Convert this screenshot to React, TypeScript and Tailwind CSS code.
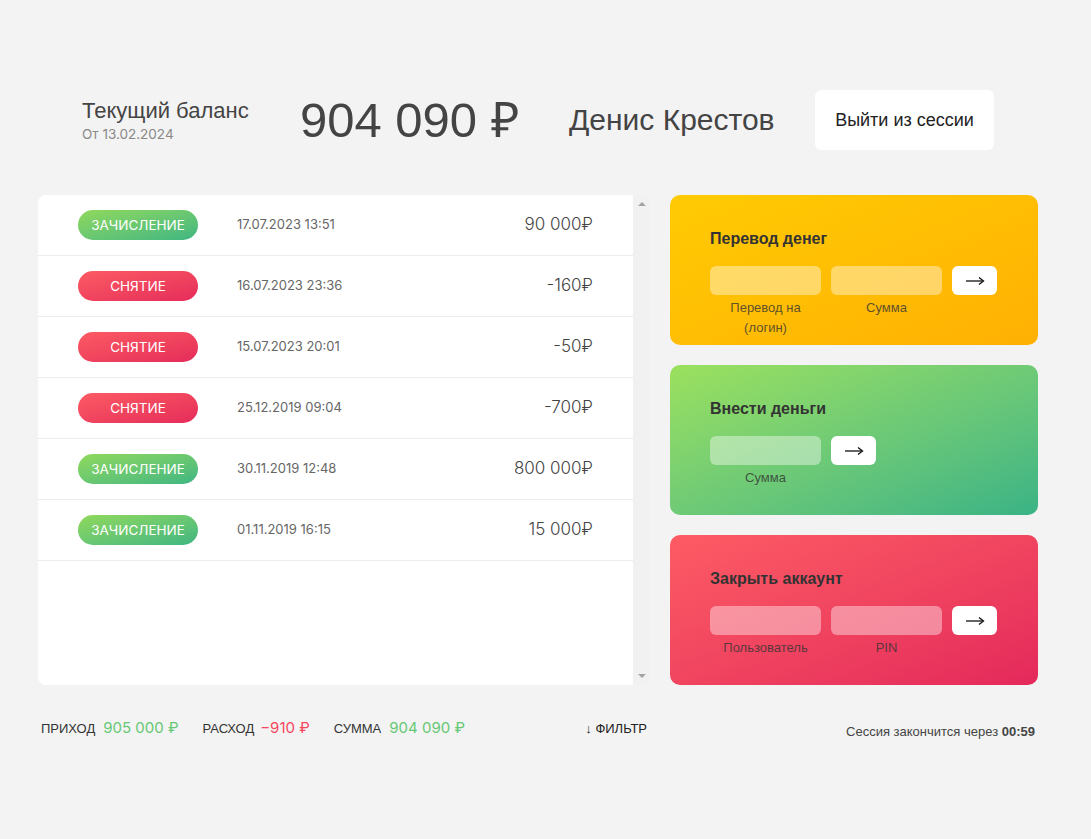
import React from 'react';

type Movement = {
  type: 'deposit' | 'withdrawal';
  date: string;
  amount: string;
};

const movements: Movement[] = [
  { type: 'deposit', date: '17.07.2023 13:51', amount: '90 000₽' },
  { type: 'withdrawal', date: '16.07.2023 23:36', amount: '-160₽' },
  { type: 'withdrawal', date: '15.07.2023 20:01', amount: '-50₽' },
  { type: 'withdrawal', date: '25.12.2019 09:04', amount: '-700₽' },
  { type: 'deposit', date: '30.11.2019 12:48', amount: '800 000₽' },
  { type: 'deposit', date: '01.11.2019 16:15', amount: '15 000₽' },
];

const sans = "font-['Liberation_Sans','Helvetica',sans-serif]";
const geo = "font-['Inter','Lato',sans-serif]";

const Arrow = () => (
  <svg width="20" height="10" viewBox="0 0 20 10" fill="none" stroke="#111" strokeWidth="1.3">
    <path d="M1 5h17" />
    <path d="M14 1.5L18.5 5L14 8.5" />
  </svg>
);

const GoButton = () => (
  <button className="flex h-[29px] w-[45px] items-center justify-center rounded-[6px] bg-white">
    <Arrow />
  </button>
);

const OpCard: React.FC<{
  title: string;
  bg: string;
  labels: string[];
}> = ({ title, bg, labels }) => (
  <div className={`h-[150px] rounded-[10px] px-10 pt-[32px] ${bg}`}>
    <h2 className={`text-[16px] font-bold text-[#333] ${sans}`}>{title}</h2>
    <div className="mt-[15px] flex gap-[10px]">
      {labels.map((label) => (
        <div key={label} className="flex w-[111px] flex-col items-center">
          <div className="h-[29px] w-full rounded-[6px] bg-white/40" />
          <span className={`mt-[3px] px-3 text-center text-[13px] leading-[20px] text-[#333]/80 ${sans}`}>{label}</span>
        </div>
      ))}
      <GoButton />
    </div>
  </div>
);

export default function App() {
  return (
    <div className={`min-h-[839px] bg-[#f3f3f3] text-[#444] ${sans}`}>
      <div className="ml-[38px] w-[1000px] pt-[90px]">
        {/* Header */}
        <header className="flex items-center pl-[44px]">
          <div className="w-[218px] pt-[2px]">
            <p className="text-[22px] leading-[26px] text-[#444]">Текущий баланс</p>
            <p className={`text-[13.5px] text-[#888] ${geo}`}>От 13.02.2024</p>
          </div>
          <p className="w-[269px] text-[49px] leading-none text-[#444]">904 090 ₽</p>
          <p className="w-[246px] text-[30px] leading-none text-[#444]">Денис Крестов</p>
          <button className="h-[60px] w-[179px] rounded-[6px] bg-white text-[18px] text-[#222]">
            Выйти из сессии
          </button>
        </header>

        {/* Main */}
        <main className="mt-[45px] flex gap-5">
          <div className="flex h-[490px] w-[612px] overflow-hidden rounded-[8px] bg-white">
            <div className="flex-1">
              {movements.map((m, i) => (
                <div key={i} className="flex h-[61px] items-center border-b border-[#ececec] pl-10 pr-10">
                  <span
                    className={`flex h-[30px] w-[120px] items-center justify-center rounded-full text-[13.5px] text-white ${geo} ${
                      m.type === 'deposit'
                        ? 'bg-gradient-to-br from-[#8fd95a] to-[#3db681]'
                        : 'bg-gradient-to-br from-[#fc5a63] to-[#e52a5a]'
                    }`}
                  >
                    {m.type === 'deposit' ? 'ЗАЧИСЛЕНИЕ' : 'СНЯТИЕ'}
                  </span>
                  <span className={`ml-[39px] text-[13px] text-[#666] ${geo}`}>{m.date}</span>
                  <span className={`ml-auto text-[17px] font-light text-[#444] ${geo}`}>{m.amount}</span>
                </div>
              ))}
            </div>
            {/* scrollbar */}
            <div className="flex w-[17px] flex-col items-center justify-between bg-[#f1f1f1] py-[7px]">
              <span className="h-0 w-0 border-x-[4px] border-b-[4px] border-x-transparent border-b-[#a3a3a3]" />
              <span className="h-0 w-0 border-x-[4px] border-t-[4px] border-x-transparent border-t-[#a3a3a3]" />
            </div>
          </div>

          <div className="flex w-[368px] flex-col gap-5">
            <OpCard
              title="Перевод денег"
              bg="bg-gradient-to-br from-[#ffcb03] to-[#ffb003]"
              labels={['Перевод на (логин)', 'Сумма']}
            />
            <div className="h-[150px] rounded-[10px] bg-gradient-to-br from-[#9be15d] to-[#39b385] px-10 pt-[32px]">
              <h2 className="text-[16px] font-bold text-[#333]">Внести деньги</h2>
              <div className="mt-[15px] flex gap-[10px]">
                <div className="flex w-[111px] flex-col items-center">
                  <div className="h-[29px] w-full rounded-[6px] bg-white/40" />
                  <span className="mt-[3px] text-[13px] leading-[20px] text-[#333]/80">Сумма</span>
                </div>
                <GoButton />
              </div>
            </div>
            <OpCard
              title="Закрыть аккаунт"
              bg="bg-gradient-to-br from-[#fd5b64] to-[#e4285b]"
              labels={['Пользователь', 'PIN']}
            />
          </div>
        </main>

        {/* Footer */}
        <footer className="mt-[32px] flex items-start">
          <div className="flex w-[612px] items-center pl-[3px]">
            <span className="text-[13px] text-[#333]">ПРИХОД</span>
            <span className={`ml-[8px] text-[15px] text-[#66c873] ${geo}`}>905 000 ₽</span>
            <span className="ml-[24px] text-[13px] text-[#333]">РАСХОД</span>
            <span className={`ml-[6px] text-[15px] text-[#f5465d] ${geo}`}>−910 ₽</span>
            <span className="ml-[24px] text-[13px] text-[#333]">СУММА</span>
            <span className={`ml-[8px] text-[15px] text-[#66c873] ${geo}`}>904 090 ₽</span>
            <button className="ml-auto mr-[3px] text-[13px] text-[#222]">↓ ФИЛЬТР</button>
          </div>
          <p className="ml-auto mr-[3px] mt-[5px] text-[13px] text-[#444]">
            Сессия закончится через <span className="font-bold">00:59</span>
          </p>
        </footer>
      </div>
    </div>
  );
}
